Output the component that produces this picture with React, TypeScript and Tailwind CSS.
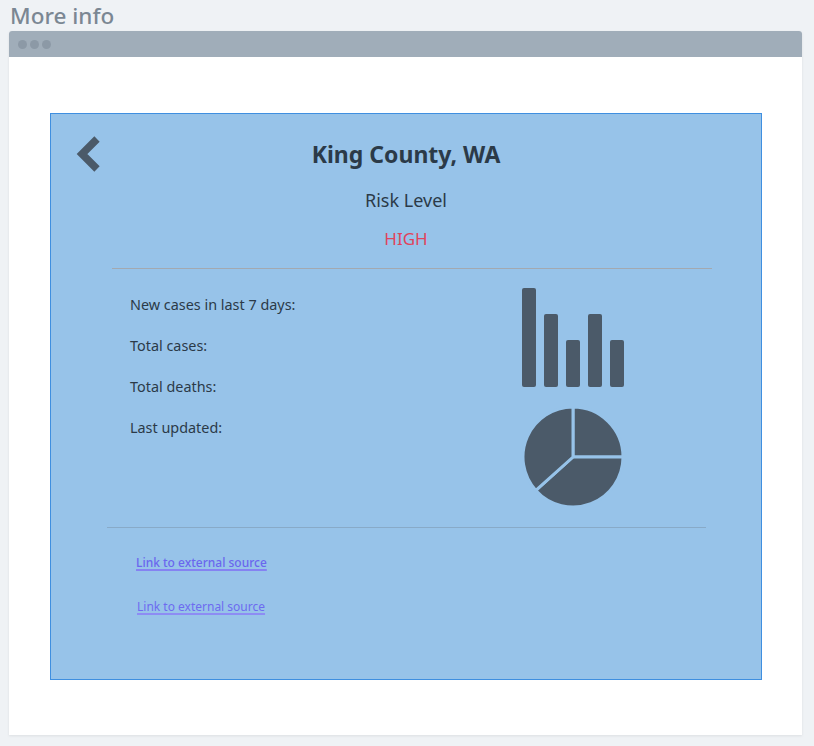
import React from "react";

const font = { fontFamily: '"Noto Sans", "DejaVu Sans", sans-serif' };

// back chevron
function Chevron() {
  return (
    <svg width="26" height="36" viewBox="0 0 26 36">
      <polyline
        points="21,3 6,18 21,33"
        fill="none"
        stroke="#4b5a69"
        strokeWidth="7.5"
        strokeLinejoin="miter"
      />
    </svg>
  );
}

function Bars() {
  const bars = [0, 26, 52, 26, 52];
  return (
    <svg width="104" height="100" viewBox="0 0 104 100">
      {bars.map((top, i) => (
        <rect
          key={i}
          x={i * 22}
          y={top}
          width="14"
          height={99 - top}
          rx="2"
          fill="#4b5a69"
        />
      ))}
    </svg>
  );
}

// pie with three slices, gaps in card colour
function Pie() {
  const cx = 51;
  const cy = 51;
  const r = 50;
  const pt = (deg: number) => {
    const a = ((deg - 90) * Math.PI) / 180;
    return [cx + r * Math.cos(a), cy + r * Math.sin(a)];
  };
  const slice = (a0: number, a1: number) => {
    const [x0, y0] = pt(a0);
    const [x1, y1] = pt(a1);
    const large = a1 - a0 > 180 ? 1 : 0;
    return `M${cx},${cy} L${x0},${y0} A${r},${r} 0 ${large} 1 ${x1},${y1} Z`;
  };
  return (
    <svg width="102" height="102" viewBox="0 0 102 102">
      {[
        [0, 90],
        [90, 228],
        [228, 360],
      ].map(([a, b], i) => (
        <path
          key={i}
          d={slice(a, b)}
          fill="#4b5a69"
          stroke="#97c3e9"
          strokeWidth="3"
          strokeLinejoin="round"
        />
      ))}
    </svg>
  );
}

export default function App() {
  const labels = [
    "New cases in last 7 days:",
    "Total cases:",
    "Total deaths:",
    "Last updated:",
  ];

  return (
    <div
      className="min-h-[746px] w-[814px] bg-[#eff2f5] pl-[9px] pr-[12px] pb-[11px]"
      style={font}
    >
      <h1 className="h-[31px] pl-px pt-[2px] text-[22.5px] font-medium leading-[28px] text-[#7b8793]">
        More info
      </h1>

      <div className="rounded-t-[3px] bg-white shadow-[0_1px_3px_rgba(0,0,0,0.08)]">
        {/* window bar */}
        <div className="flex h-[26px] items-center gap-[3px] rounded-t-[3px] bg-[#a0adb9] pl-[9px]">
          <span className="h-[9px] w-[9px] rounded-full bg-[#8c99a6]" />
          <span className="h-[9px] w-[9px] rounded-full bg-[#8c99a6]" />
          <span className="h-[9px] w-[9px] rounded-full bg-[#8c99a6]" />
        </div>

        <div className="px-[40px] pb-[55px] pl-[41px] pt-[56px]">
          <div className="h-[567px] border border-[#3f8fe0] bg-[#97c3e9]">
            {/* header */}
            <div className="grid grid-cols-[1fr_auto_1fr] items-center pt-[22px]">
              <div className="pl-[25px]">
                <Chevron />
              </div>
              <div className="text-[23px] font-bold leading-[28px] text-[#2b3a48]">
                King County, WA
              </div>
              <div />
            </div>
            <div className="mt-[16px] text-center text-[18px] leading-[24px] text-[#2b3a48]">
              Risk Level
            </div>
            <div className="mt-[15px] text-center text-[17px] leading-[24px] text-[#e0435c]">
              HIGH
            </div>
            <div className="ml-[61px] mr-[49px] mt-[17px] h-px bg-[#a3a9b0]" />

            {/* stats + charts */}
            <div className="mt-[19px] flex">
              <div className="flex w-[471px] flex-col gap-[21px] pl-[79px] pt-[7px]">
                {labels.map((l) => (
                  <div key={l} className="text-[14.4px] leading-[20px] text-[#2b3a48]">
                    {l}
                  </div>
                ))}
              </div>
              <div className="flex flex-col gap-[18px]">
                <Bars />
                <Pie />
              </div>
            </div>

            <div className="ml-[56px] mr-[55px] mt-[19px] h-px bg-[#88aac8]" />

            <div className="flex flex-col items-start gap-[26px] pl-[85px] pt-[26px]">
              <a
                href="#"
                className="text-[12px] font-medium leading-[18px] text-[#6a67ee] underline decoration-[#8582f2] decoration-2 underline-offset-2"
              >
                Link to external source
              </a>
              <a
                href="#"
                className="ml-px text-[12px] leading-[18px] text-[#6d6bf0] underline decoration-[#8d8cf4] decoration-2 underline-offset-2"
              >
                Link to external source
              </a>
            </div>
          </div>
        </div>
      </div>
    </div>
  );
}
